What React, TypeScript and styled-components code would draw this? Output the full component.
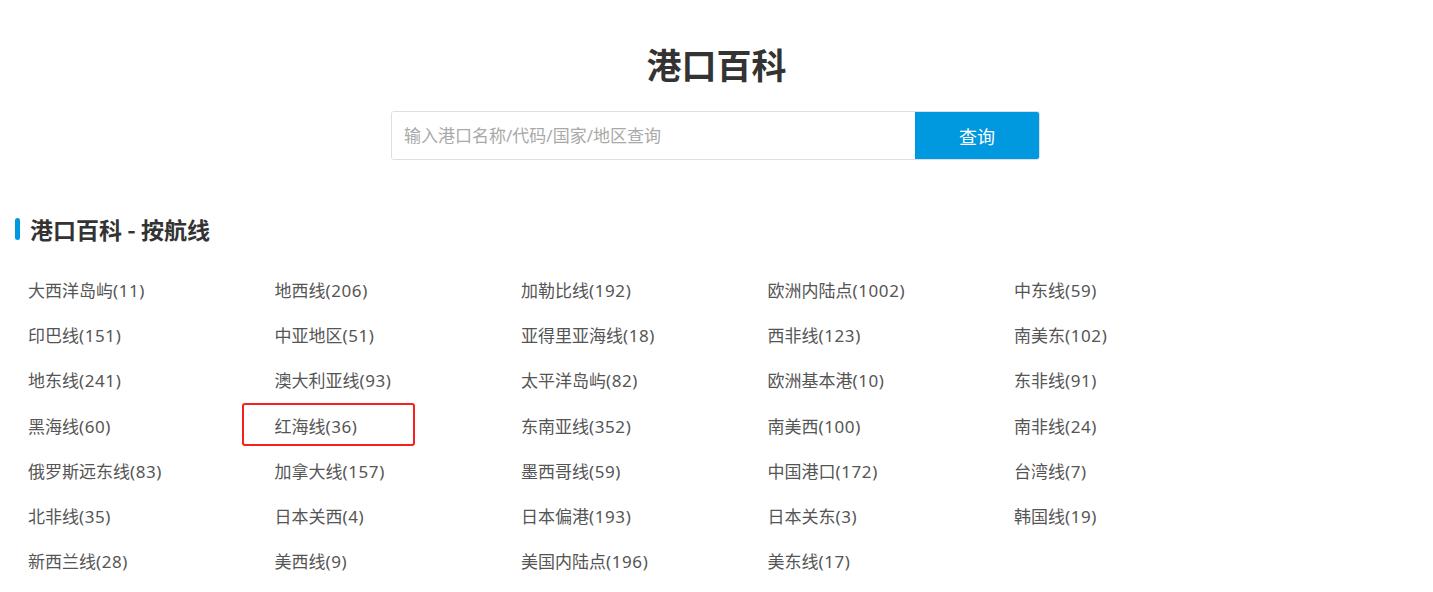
import React from "react";
import styled, { createGlobalStyle } from "styled-components";

const Global = createGlobalStyle`
  html, body { margin: 0; padding: 0; background: #fff; }
  body { font-family: "Noto Sans", "Noto Sans CJK SC", sans-serif; }
`;

const Page = styled.div`
  width: 1433px;
  padding-top: 39px;
`;

const Title = styled.h1`
  margin: 0;
  text-align: center;
  font-family: "Noto Sans CJK SC", sans-serif;
  font-size: 35px;
  font-weight: 700;
  line-height: 50px;
  color: #333;
`;

const SearchBar = styled.form`
  display: flex;
  width: 649px;
  height: 49px;
  margin: 22px auto 0;
  box-sizing: border-box;
  border: 1px solid #dcdfe6;
  border-radius: 3px;
  overflow: hidden;
  position: relative;
  left: -1px;
`;

const SearchInput = styled.input`
  flex: 1;
  border: none;
  outline: none;
  padding: 0 12px;
  font-family: "Noto Sans", "Noto Sans CJK SC", sans-serif;
  font-size: 17px;
  color: #333;
  &::placeholder { color: #a9a9a9; }
`;

const SearchButton = styled.button`
  width: 124px;
  border: none;
  background: #0098de;
  color: #fff;
  font-family: "Noto Sans CJK SC", sans-serif;
  font-size: 18px;
  cursor: pointer;
`;

const Section = styled.section`
  margin-top: 57px;
  padding-left: 15px;
`;

const SectionHeader = styled.h2`
  display: flex;
  align-items: center;
  gap: 10px;
  margin: 0;
  font-family: "Noto Sans CJK SC", sans-serif;
  font-size: 23px;
  font-weight: 700;
  line-height: 24px;
  color: #333;
  &::before {
    content: "";
    width: 5px;
    height: 22px;
    border-radius: 3px;
    background: #0098de;
  }
`;

const Grid = styled.ul`
  list-style: none;
  margin: 38px 0 0;
  padding: 0 0 0 13px;
  display: grid;
  grid-template-columns: repeat(5, 246.5px);
  grid-auto-rows: 45.2px;
`;

const Item = styled.li`
  position: relative;
  font-family: "Noto Sans", "Noto Sans CJK SC", sans-serif;
  font-size: 17px;
  line-height: 24px;
  color: #555;
  white-space: nowrap;
`;

const Count = styled.span`
  letter-spacing: 0.6px;
`;

const Highlight = styled.span`
  position: absolute;
  left: -33px;
  top: -12px;
  width: 173px;
  height: 43px;
  box-sizing: border-box;
  border: 2px solid #f5211c;
  border-radius: 3px;
  pointer-events: none;
`;

const items: [string, number][] = [
  ["大西洋岛屿", 11], ["地西线", 206], ["加勒比线", 192], ["欧洲内陆点", 1002], ["中东线", 59],
  ["印巴线", 151], ["中亚地区", 51], ["亚得里亚海线", 18], ["西非线", 123], ["南美东", 102],
  ["地东线", 241], ["澳大利亚线", 93], ["太平洋岛屿", 82], ["欧洲基本港", 10], ["东非线", 91],
  ["黑海线", 60], ["红海线", 36], ["东南亚线", 352], ["南美西", 100], ["南非线", 24],
  ["俄罗斯远东线", 83], ["加拿大线", 157], ["墨西哥线", 59], ["中国港口", 172], ["台湾线", 7],
  ["北非线", 35], ["日本关西", 4], ["日本偏港", 193], ["日本关东", 3], ["韩国线", 19],
  ["新西兰线", 28], ["美西线", 9], ["美国内陆点", 196], ["美东线", 17],
];

export default function App() {
  return (
    <Page>
      <Global />
      <Title>港口百科</Title>
      <SearchBar onSubmit={(e) => e.preventDefault()}>
        <SearchInput placeholder="输入港口名称/代码/国家/地区查询" />
        <SearchButton type="submit">查询</SearchButton>
      </SearchBar>
      <Section>
        <SectionHeader>港口百科 - 按航线</SectionHeader>
        <Grid>
          {items.map(([name, n]) => (
            <Item key={name}>
              {name}
              <Count>({n})</Count>
              {name === "红海线" && <Highlight />}
            </Item>
          ))}
        </Grid>
      </Section>
    </Page>
  );
}
